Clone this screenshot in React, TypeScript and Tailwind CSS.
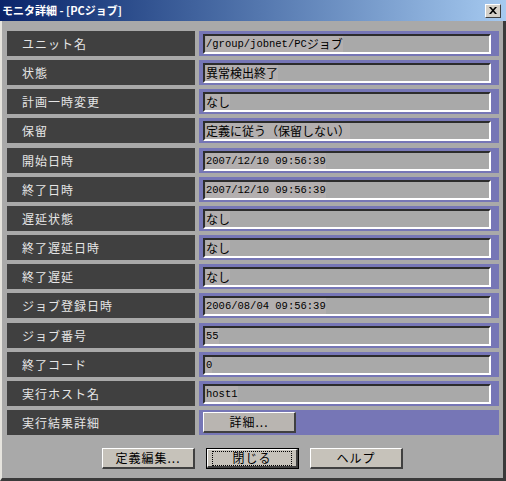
import React from 'react';

const rows: { label: string; value: string; gap?: boolean }[] = [
  { label: 'ユニット名', value: '/group/jobnet/PCジョブ' },
  { label: '状態', value: '異常検出終了' },
  { label: '計画一時変更', value: 'なし' },
  { label: '保留', value: '定義に従う（保留しない）' },
  { label: '開始日時', value: '2007/12/10 09:56:39', gap: true },
  { label: '終了日時', value: '2007/12/10 09:56:39' },
  { label: '遅延状態', value: 'なし' },
  { label: '終了遅延日時', value: 'なし' },
  { label: '終了遅延', value: 'なし' },
  { label: 'ジョブ登録日時', value: '2006/08/04 09:56:39' },
  { label: 'ジョブ番号', value: '55', gap: true },
  { label: '終了コード', value: '0' },
  { label: '実行ホスト名', value: 'host1' },
];

// split a value into ascii / wide runs so ascii gets the half-width mono look
function Val({ text }: { text: string }) {
  const runs = text.match(/[\x20-\x7e]+|[^\x20-\x7e]+/g) || [];
  return (
    <div className="h-[16px] flex items-center bg-[#b3afaf] whitespace-pre">
      {runs.map((r, i) =>
        /^[\x20-\x7e]+$/.test(r) ? (
          <span key={i} className="font-['Liberation_Mono',monospace] text-[10.5px] leading-none">
            {r}
          </span>
        ) : (
          <span key={i} className="font-['Noto_Sans_CJK_JP',sans-serif] text-[12px] leading-none">
            {r}
          </span>
        )
      )}
    </div>
  );
}

function Btn({ children, main }: { children: React.ReactNode; main?: boolean }) {
  return (
    <div
      className={`w-[93px] h-[21px] bg-[#c6c2ba] flex items-center justify-center ${
        main ? 'border border-black' : ''
      }`}
    >
      <div className="w-full h-full border-t border-l border-t-white border-l-white border-b-2 border-r-2 border-b-[#404040] border-r-[#404040] flex items-center justify-center">
        <div
          className={`px-[6px] h-[15px] flex items-center justify-center tracking-[1px] text-[12px] text-black font-['Noto_Sans_CJK_JP',sans-serif] ${
            main ? 'border border-dotted border-black w-[80px]' : ''
          }`}
        >
          {children}
        </div>
      </div>
    </div>
  );
}

export default function App() {
  return (
    <div className="w-[506px] h-[481px] flex flex-col bg-[#a9a9a9] font-['Noto_Sans_CJK_JP',sans-serif] overflow-hidden">
      {/* title bar */}
      <div className="h-[21px] shrink-0 flex items-center justify-between pl-[2px] pr-[5px] bg-gradient-to-r from-[#0a246a] to-[#a6caf0]">
        <span className="text-white font-bold text-[11px] leading-none">モニタ詳細 - [PCジョブ]</span>
        <div className="w-[16px] h-[14px] bg-[#d4d0c8] border-t border-l border-t-white border-l-white border-b border-r border-b-[#404040] border-r-[#404040] flex items-center justify-center">
          <svg width="8" height="7" viewBox="0 0 8 7">
            <path d="M0 0h2l2 2.2L6 0h2L5 3.5 8 7H6L4 4.8 2 7H0l3-3.5z" fill="#000" />
          </svg>
        </div>
      </div>

      <div className="flex-1 flex flex-col border-l-2 border-l-[#e6e4de] border-r-[3px] border-r-[#3a3a3a] border-b-[3px] border-b-[#3a3a3a] pl-[5px] pt-[10px]">
        {rows.map((r, i) => (
          <div key={i} className={`flex h-[25px] w-[492px] gap-[4px] ${i === 0 ? '' : r.gap ? 'mt-[5px]' : 'mt-[4px]'}`}>
            <div className="w-[188px] bg-[#404040] flex items-center pl-[15px] text-[12px] text-[#e6e6e6] tracking-[1px]">
              {r.label}
            </div>
            <div className="flex-1 bg-[#7676b6] pl-[4px] pr-[8px] pt-[3px]">
              <div className="h-[20px] bg-[#a9a9a9] border-2 border-t-[#2c2c2c] border-l-[#2c2c2c] border-b-white border-r-white pl-[1px] flex items-center text-black">
                <Val text={r.value} />
              </div>
            </div>
          </div>
        ))}

        {/* last row with button */}
        <div className="flex h-[25px] w-[492px] gap-[4px] mt-[4px]">
          <div className="w-[188px] bg-[#404040] flex items-center pl-[15px] text-[12px] text-[#e6e6e6] tracking-[1px]">
            実行結果詳細
          </div>
          <div className="flex-1 bg-[#7676b6] pl-[4px] pt-[2px]">
            <div className="w-[93px] h-[21px] bg-[#b9b5b1] border-t border-l border-t-white border-l-white border-b-2 border-r-2 border-b-[#404040] border-r-[#404040] flex items-center justify-center text-[12px] text-black tracking-[1px]">
              詳細...
            </div>
          </div>
        </div>

        <div className="flex gap-[11px] pl-[95px] mt-[13px]">
          <Btn>定義編集...</Btn>
          <Btn main>閉じる</Btn>
          <Btn>ヘルプ</Btn>
        </div>
      </div>
    </div>
  );
}
